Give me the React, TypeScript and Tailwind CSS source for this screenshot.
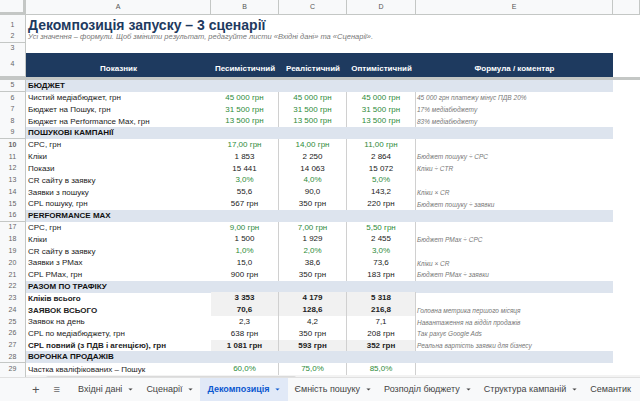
import React from "react";

type R = { n: number; a: string; v?: string[]; g?: boolean; b?: boolean; tot?: boolean; e?: string; sec?: boolean };

const rows: R[] = [
  { n: 5, a: "БЮДЖЕТ", sec: true },
  { n: 6, a: "Чистий медіабюджет, грн", v: ["45 000 грн", "45 000 грн", "45 000 грн"], g: true, e: "45 000 грн платежу мінус ПДВ 20%" },
  { n: 7, a: "Бюджет на Пошук, грн", v: ["31 500 грн", "31 500 грн", "31 500 грн"], g: true, e: "17% медіабюджету" },
  { n: 8, a: "Бюджет на Performance Max, грн", v: ["13 500 грн", "13 500 грн", "13 500 грн"], g: true, e: "83% медіабюджету" },
  { n: 9, a: "ПОШУКОВІ КАМПАНІЇ", sec: true },
  { n: 10, a: "CPC, грн", v: ["17,00 грн", "14,00 грн", "11,00 грн"], g: true, e: "" },
  { n: 11, a: "Кліки", v: ["1 853", "2 250", "2 864"], e: "Бюджет пошуку ÷ CPC" },
  { n: 12, a: "Покази", v: ["15 441", "14 063", "15 072"], e: "Кліки ÷ CTR" },
  { n: 13, a: "CR сайту в заявку", v: ["3,0%", "4,0%", "5,0%"], g: true, e: "" },
  { n: 14, a: "Заявки з пошуку", v: ["55,6", "90,0", "143,2"], e: "Кліки × CR" },
  { n: 15, a: "CPL пошуку, грн", v: ["567 грн", "350 грн", "220 грн"], e: "Бюджет пошуку ÷ заявки" },
  { n: 16, a: "PERFORMANCE MAX", sec: true },
  { n: 17, a: "CPC, грн", v: ["9,00 грн", "7,00 грн", "5,50 грн"], g: true, e: "" },
  { n: 18, a: "Кліки", v: ["1 500", "1 929", "2 455"], e: "Бюджет PMax ÷ CPC" },
  { n: 19, a: "CR сайту в заявку", v: ["1,0%", "2,0%", "3,0%"], g: true, e: "" },
  { n: 20, a: "Заявки з PMax", v: ["15,0", "38,6", "73,6"], e: "Кліки × CR" },
  { n: 21, a: "CPL PMax, грн", v: ["900 грн", "350 грн", "183 грн"], e: "Бюджет PMax ÷ заявки" },
  { n: 22, a: "РАЗОМ ПО ТРАФІКУ", sec: true },
  { n: 23, a: "Кліків всього", v: ["3 353", "4 179", "5 318"], b: true, tot: true, e: "" },
  { n: 24, a: "ЗАЯВОК ВСЬОГО", v: ["70,6", "128,6", "216,8"], b: true, tot: true, e: "Головна метрика першого місяця" },
  { n: 25, a: "Заявок на день", v: ["2,3", "4,2", "7,1"], e: "Навантаження на відділ продажів" },
  { n: 26, a: "CPL по медіабюджету, грн", v: ["638 грн", "350 грн", "208 грн"], e: "Так рахує Google Ads" },
  { n: 27, a: "CPL повний (з ПДВ і агенцією), грн", v: ["1 081 грн", "593 грн", "352 грн"], b: true, tot: true, e: "Реальна вартість заявки для бізнесу" },
  { n: 28, a: "ВОРОНКА ПРОДАЖІВ", sec: true },
  { n: 29, a: "Частка кваліфікованих – Пошук", v: ["60,0%", "75,0%", "85,0%"], g: true, e: "" },
];

const cols = "grid-cols-[26px_185px_68px_68px_69px_197px_1fr]";
const rn = "flex items-center justify-center text-[7px] text-[#666] bg-[#f8f9fa] border-r border-b border-[#c4c7c5]";

function Caret({ c = "#444" }: { c?: string }) {
  return <svg width="7" height="7" viewBox="0 0 10 10" className="ml-[5px]"><path d="M2 3.5 L5 6.5 L8 3.5 Z" fill={c} /></svg>;
}

export default function App() {
  return (
    <div className="w-[640px] h-[401px] overflow-hidden bg-white flex flex-col" style={{ fontFamily: "Arial, 'Liberation Sans', sans-serif" }}>
      <div className="flex-1 overflow-hidden">
        <div className={`grid ${cols} h-[15px]`}>
          <div className="bg-[#f8f9fa] border-r-[3px] border-b-[3px] border-[#c4c7c5]" />
          {["A", "B", "C", "D", "E", ""].map((l, i) => (
            <div key={i} className="bg-[#f8f9fa] border-r border-b border-[#c4c7c5] flex items-center justify-center text-[7px] text-[#555]">{l}</div>
          ))}
        </div>
        <div className={`grid ${cols} h-[15px]`}>
          <div className={rn}>1</div>
          <div className="col-span-6 flex items-center pl-[2px] text-[14px] font-bold text-[#1e3a5f] whitespace-nowrap">Декомпозиція запуску – 3 сценарії</div>
        </div>
        <div className={`grid ${cols} h-[13px]`}>
          <div className={rn}>2</div>
          <div className="col-span-6 flex items-center pl-[2px] text-[7.5px] italic text-[#777] whitespace-nowrap">Усі значення – формули. Щоб змінити результат, редагуйте листи «Вхідні дані» та «Сценарії».</div>
        </div>
        <div className={`grid ${cols} h-[10px]`}>
          <div className={rn}>3</div>
          <div className="col-span-6" />
        </div>
        <div className={`grid ${cols} h-[27px] border-b-[3px] border-[#c4c7c5]`}>
          <div className={rn}>4</div>
          {["Показник", "Песимістичний", "Реалістичний", "Оптимістичний", "Формула / коментар"].map((h, i) => (
            <div key={i} className="bg-[#1e3a5f] text-white font-bold text-[8px] flex items-end justify-center pb-[2px] whitespace-nowrap">{h}</div>
          ))}
          <div />
        </div>
        {rows.map((r) => (
          <div key={r.n} className={`grid ${cols} h-[11.8px]`}>
            <div className={`${rn} ${r.n === 10 ? "bg-[#d3e3fd] font-bold text-[#222]" : ""}`}>{r.n}</div>
            {r.sec ? (
              <>
                <div className="col-span-5 bg-[#dde4ee] flex items-center pl-[2px] text-[8px] font-bold text-[#111] whitespace-nowrap">{r.a}</div>
                <div />
              </>
            ) : (
              <>
                <div className={`flex items-center pl-[2px] text-[8px] text-[#222] whitespace-nowrap ${r.b ? "font-bold" : ""}`}>{r.a}</div>
                {r.v!.map((v, i) => (
                  <div key={i} className={`flex items-center justify-center text-[8px] border-r border-b border-[#d0d0d0] ${r.tot ? "bg-[#f1f1f1]" : "bg-white"} ${r.g ? "text-[#2e8b3a]" : "text-[#222]"} ${r.b ? "font-bold" : ""}`}>{v}</div>
                ))}
                <div className="flex items-center pl-[1px] text-[6.5px] italic text-[#777] whitespace-nowrap">{r.e}</div>
                <div />
              </>
            )}
          </div>
        ))}
        <div className={`grid ${cols} h-[6px]`}>
          <div className="bg-[#f8f9fa] border-r border-[#c4c7c5]" />
          <div className="col-span-6 bg-[#f3f3f3] flex items-center">
            <div className="h-[4px] w-[250px] bg-[#dadada] rounded ml-[20px]" />
          </div>
        </div>
      </div>
      <div className="h-[24px] bg-[#f8f9fa] border-t border-[#e0e0e0] flex items-center text-[9px] text-[#444] whitespace-nowrap overflow-hidden">
        <span className="ml-[32px] text-[13px] text-[#555]">+</span>
        <span className="ml-[14px] text-[11px] text-[#666]">≡</span>
        <div className="ml-[18px] flex items-center">Вхідні дані<Caret /></div>
        <div className="ml-[12px] flex items-center">Сценарії<Caret /></div>
        <div className="ml-[6px] h-[24px] px-[7px] bg-[#e1e9f7] text-[#0b57d0] font-bold flex items-center">Декомпозиція<Caret c="#0b57d0" /></div>
        <div className="ml-[6px] flex items-center">Ємність пошуку<Caret /></div>
        <div className="ml-[12px] flex items-center">Розподіл бюджету<Caret /></div>
        <div className="ml-[12px] flex items-center">Структура кампаній<Caret /></div>
        <div className="ml-[12px] flex items-center shrink-0">Семантик</div>
      </div>
    </div>
  );
}
